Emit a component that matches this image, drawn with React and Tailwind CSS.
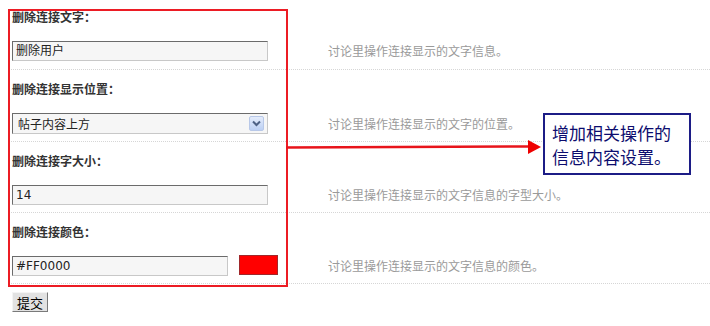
import React from "react";

const rows = [
  { label: "删除连接文字：", desc: "讨论里操作连接显示的文字信息。", kind: "text", value: "删除用户" },
  { label: "删除连接显示位置：", desc: "讨论里操作连接显示的文字的位置。", kind: "select", value: "帖子内容上方" },
  { label: "删除连接字大小：", desc: "讨论里操作连接显示的文字信息的字型大小。", kind: "text", value: "14" },
  { label: "删除连接颜色：", desc: "讨论里操作连接显示的文字信息的颜色。", kind: "color", value: "#FF0000" },
];

const inputCls =
  "h-5 bg-[#f6f6f6] border border-t-[#6b6b6b] border-l-[#6b6b6b] border-r-[#c8c8c8] border-b-[#c8c8c8] px-[3px] text-[12px] leading-[18px] text-[#222] font-['DejaVu_Sans','Noto_Sans_CJK_SC',sans-serif]";

const Field = ({ row }) => {
  if (row.kind === "select") {
    return (
      <div className={`${inputCls} w-[256px] h-[21px] flex items-center justify-between pr-[3px]`}>
        <span className="pl-[2px] font-['Noto_Sans_CJK_SC',sans-serif]">{row.value}</span>
        {/* XP style dropdown button */}
        <div className="w-[15px] h-[15px] rounded-[2px] border border-[#b8c8e8] bg-gradient-to-b from-[#e4ecfb] to-[#bcd0f4] flex items-center justify-center">
          <svg width="9" height="7" viewBox="0 0 9 7">
            <path d="M1 1.5 L4.5 5 L8 1.5" fill="none" stroke="#4d6185" strokeWidth="2" />
          </svg>
        </div>
      </div>
    );
  }
  if (row.kind === "color") {
    return (
      <div className="flex items-center gap-[11px]">
        <div className={`${inputCls} w-[216px]`}>{row.value}</div>
        <div className="w-[39px] h-5 -mt-[2px] bg-[#ff0000] border border-[#a0282b]"></div>
      </div>
    );
  }
  return <div className={`${inputCls} w-[256px]`}>{row.value}</div>;
};

export default function App() {
  return (
    <div className="relative w-[710px] h-[326px] bg-white overflow-hidden font-['Noto_Sans_CJK_SC','Liberation_Sans',sans-serif]">
      {/* settings table */}
      <div className="pl-[8px]">
        {rows.map((row, i) => (
          <div
            key={i}
            className={`flex border-b border-dotted border-[#d6d6d6] pl-[4px] ${i === 0 ? "pt-[7px] pb-[8px]" : "pt-[9px] pb-[7px]"}`}
          >
            <div className="w-[316px] flex flex-col">
              <div className="h-5 leading-5 text-[12px] font-bold text-[#333]">{row.label}</div>
              <div className="mt-[14px]">
                <Field row={row} />
              </div>
            </div>
            <div className="flex flex-col justify-end">
              <div className="h-5 leading-5 text-[12px] text-[#9a9a9a]">{row.desc}</div>
            </div>
          </div>
        ))}
      </div>

      <div className="pl-[12px] mt-[8px] flex">
        <button className="w-[36px] h-5 bg-[#e2e2e2] border border-t-[#f4f4f4] border-l-[#f4f4f4] border-r-[#7a7a7a] border-b-[#7a7a7a] text-[13px] leading-[17px] text-black">
          提交
        </button>
      </div>

      {/* annotation: red highlight box */}
      <div className="absolute left-[8px] top-[9px] w-[280px] h-[278px] border-2 border-[#ec1c24]"></div>

      {/* annotation: arrow */}
      <svg className="absolute left-[286px] top-[138px]" width="260" height="18" viewBox="0 0 260 18">
        <path d="M0 9.5 L243 8.5" stroke="#e8141b" strokeWidth="2.5" />
        <polygon points="242,2 255,9 242,16" fill="#ee0000" />
      </svg>

      {/* annotation: callout */}
      <div className="absolute left-[543px] top-[113px] w-[148px] h-[62px] border-2 border-[#1c1c86] bg-white pl-[7px] pt-[6px] text-[17px] leading-[24px] text-[#0c0c6e]">
        <div>增加相关操作的</div>
        <div>信息内容设置。</div>
      </div>
    </div>
  );
}
